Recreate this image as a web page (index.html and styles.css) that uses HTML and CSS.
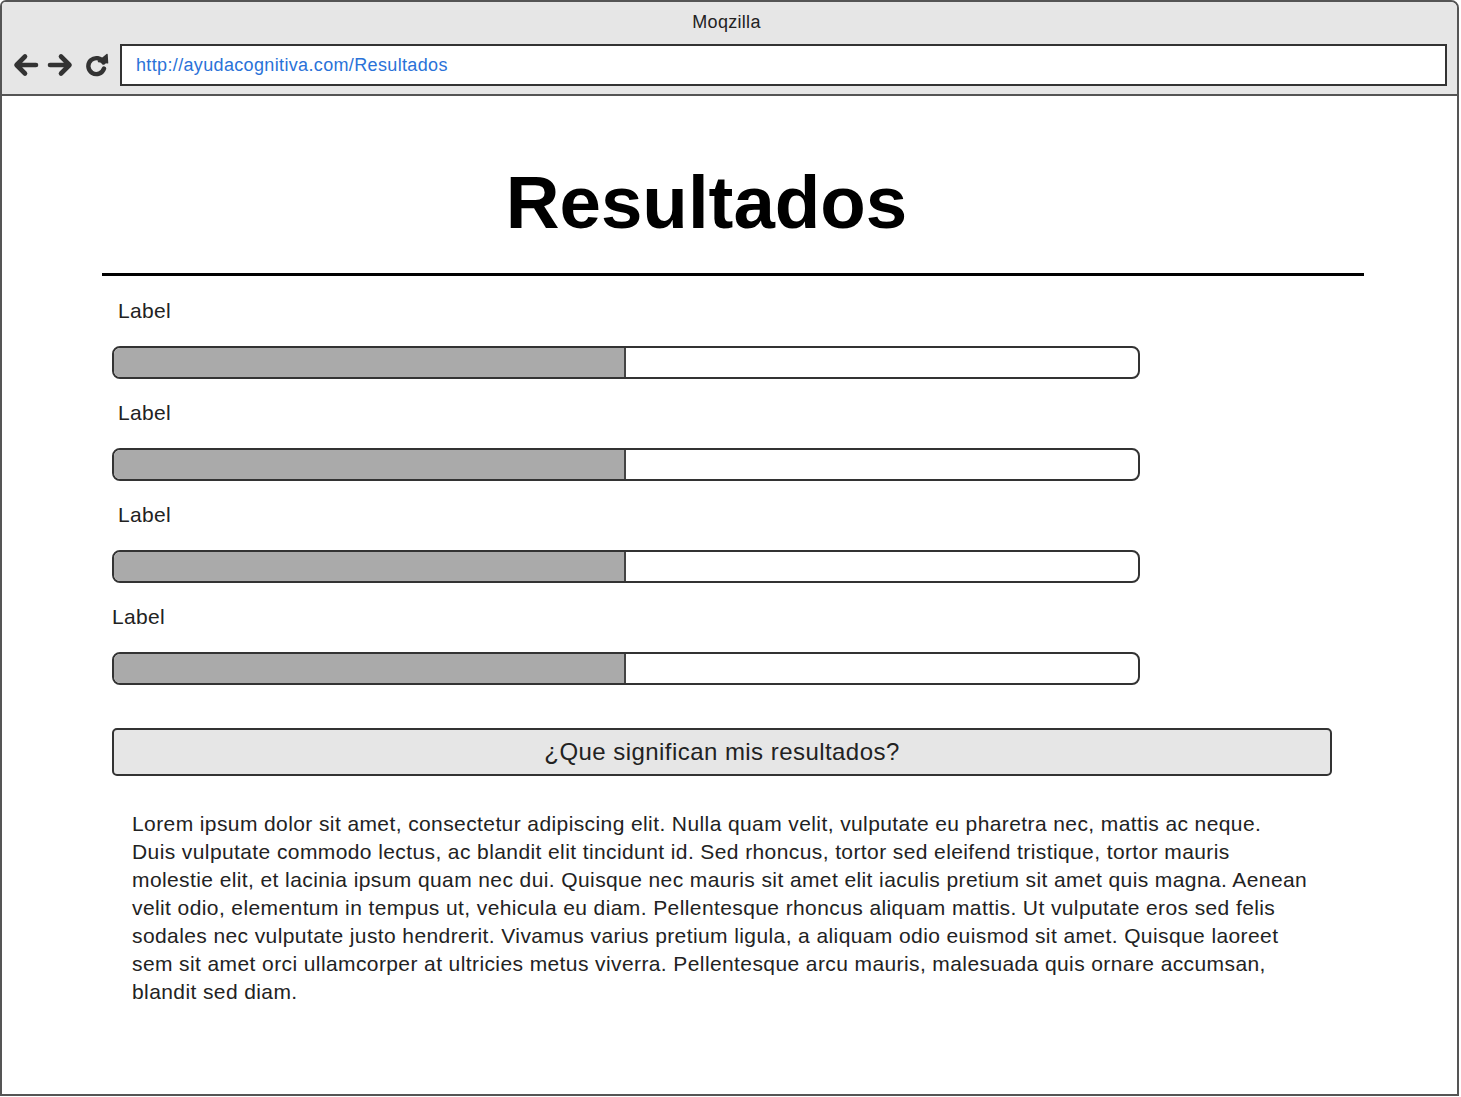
FILE: index.html
```html
<!DOCTYPE html>
<html lang="es">
<head>
<meta charset="utf-8">
<title>Moqzilla</title>
<link rel="stylesheet" href="styles.css">
</head>
<body>
<div class="window">
  <header class="chrome">
    <div class="chrome-title">Moqzilla</div>
    <div class="toolbar">
      <svg class="nav-icon" width="28" height="24" viewBox="0 0 28 24"><path d="M25 12H6M14 3.5L5.5 12L14 20.5" fill="none" stroke="#333" stroke-width="4.6" stroke-linecap="round" stroke-linejoin="round"/></svg>
      <svg class="nav-icon" width="28" height="24" viewBox="0 0 28 24"><path d="M3 12H22M14 3.5L22.5 12L14 20.5" fill="none" stroke="#333" stroke-width="4.6" stroke-linecap="round" stroke-linejoin="round"/></svg>
      <svg class="nav-icon reload" width="26" height="24" viewBox="0 0 26 24"><path d="M19.5 9.5A8 8 0 1 0 20 15.5" fill="none" stroke="#333" stroke-width="4.4" stroke-linecap="round"/><path d="M14.5 8.5L23.5 9.8L23 1.5Z" fill="#333" stroke="#333" stroke-width="1.5" stroke-linejoin="round"/></svg>
      <div class="address">http://ayudacognitiva.com/Resultados</div>
    </div>
  </header>
  <main class="page">
    <h1 class="title">Resultados</h1>
    <hr class="rule">
    <div class="results">
      <div class="item">
        <div class="label indent">Label</div>
        <div class="bar"><div class="fill" style="width:50%"></div></div>
      </div>
      <div class="item">
        <div class="label indent">Label</div>
        <div class="bar"><div class="fill" style="width:50%"></div></div>
      </div>
      <div class="item">
        <div class="label indent">Label</div>
        <div class="bar"><div class="fill" style="width:50%"></div></div>
      </div>
      <div class="item">
        <div class="label">Label</div>
        <div class="bar"><div class="fill" style="width:50%"></div></div>
      </div>
    </div>
    <button class="meaning">¿Que significan mis resultados?</button>
    <p class="text">Lorem ipsum dolor sit amet, consectetur adipiscing elit. Nulla quam velit, vulputate eu pharetra nec, mattis ac neque. Duis vulputate commodo lectus, ac blandit elit tincidunt id. Sed rhoncus, tortor sed eleifend tristique, tortor mauris molestie elit, et lacinia ipsum quam nec dui. Quisque nec mauris sit amet elit iaculis pretium sit amet quis magna. Aenean velit odio, elementum in tempus ut, vehicula eu diam. Pellentesque rhoncus aliquam mattis. Ut vulputate eros sed felis sodales nec vulputate justo hendrerit. Vivamus varius pretium ligula, a aliquam odio euismod sit amet. Quisque laoreet sem sit amet orci ullamcorper at ultricies metus viverra. Pellentesque arcu mauris, malesuada quis ornare accumsan, blandit sed diam.</p>
  </main>
</div>
</body>
</html>
```
FILE: styles.css
```css
html, body {
  margin: 0;
  padding: 0;
  background: #ffffff;
}
body {
  font-family: "Liberation Sans", Arial, sans-serif;
  color: #1a1a1a;
}
.window {
  box-sizing: border-box;
  width: 1459px;
  height: 1096px;
  border: 2px solid #555;
  border-top-left-radius: 6px;
  border-top-right-radius: 8px;
  overflow: hidden;
  background: #fff;
}
.chrome {
  box-sizing: border-box;
  height: 94px;
  background: #e6e6e6;
  border-bottom: 2px solid #555;
}
.chrome-title {
  text-align: center;
  font-size: 18px;
  letter-spacing: 0.3px;
  line-height: 20px;
  padding-top: 10px;
  padding-right: 6px;
  color: #222;
}
.toolbar {
  display: flex;
  align-items: center;
  margin-top: 12px;
  padding-left: 9px;
  padding-right: 10px;
}
.nav-icon {
  flex: none;
  margin-right: 8px;
}
.reload {
  margin-left: 1px;
  margin-right: 10px;
}
.address {
  flex: 1;
  box-sizing: border-box;
  height: 42px;
  background: #fff;
  border: 2px solid #333;
  color: #2a72d8;
  font-size: 18px;
  letter-spacing: 0.35px;
  line-height: 38px;
  padding-left: 14px;
}
.title {
  margin: 62px 0 0 0;
  padding-right: 46px;
  text-align: center;
  font-size: 74.5px;
  font-weight: bold;
  line-height: 90px;
  color: #000;
}
.rule {
  margin: 25px 0 0 100px;
  width: 1262px;
  height: 3px;
  border: none;
  background: #000;
}
.results {
  display: flex;
  flex-direction: column;
  margin-left: 110px;
  margin-top: 22px;
}
.item {
  height: 102px;
}
.label {
  font-size: 21px;
  letter-spacing: 0.3px;
  line-height: 26px;
  height: 26px;
  margin-bottom: 22px;
  color: #222;
}
.label.indent {
  padding-left: 6px;
}
.bar {
  box-sizing: border-box;
  width: 1028px;
  height: 33px;
  border: 2px solid #333;
  border-radius: 8px;
  background: #fff;
  overflow: hidden;
}
.fill {
  box-sizing: border-box;
  height: 100%;
  background: #aaaaaa;
  border-right: 2px solid #444;
}
.meaning {
  display: block;
  box-sizing: border-box;
  margin: 22px 0 0 110px;
  width: 1220px;
  height: 48px;
  background: #e6e6e6;
  border: 2px solid #333;
  border-radius: 5px;
  font-family: "Liberation Sans", Arial, sans-serif;
  font-size: 24px;
  letter-spacing: 0.45px;
  color: #222;
  padding: 0;
}
.text {
  margin: 34px 0 0 130px;
  width: 1177px;
  font-size: 21px;
  letter-spacing: 0.4px;
  line-height: 28px;
  color: #222;
}
```
